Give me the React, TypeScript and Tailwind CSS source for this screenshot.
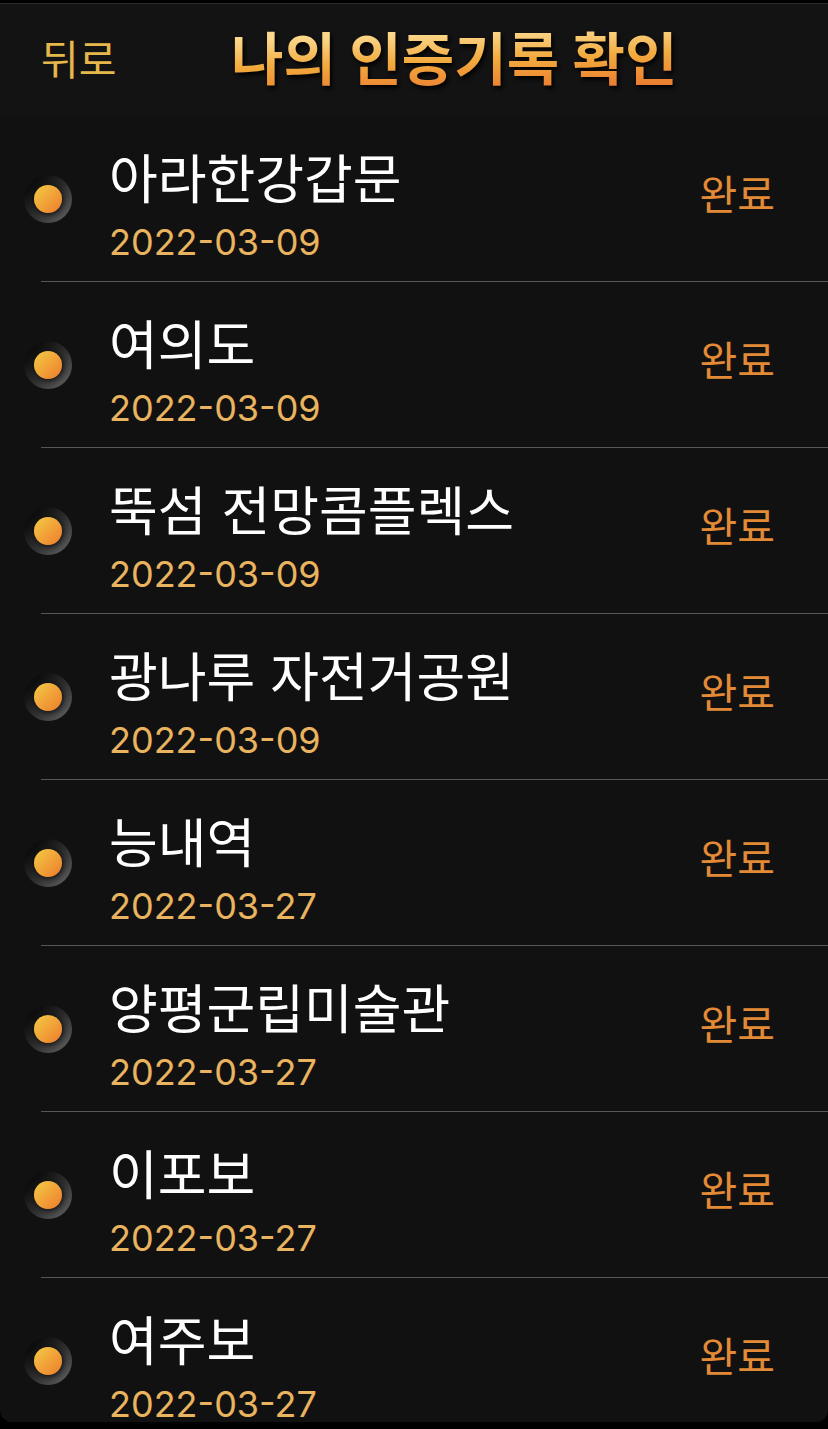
type CertRecord = {
  name: string;
  date: string;
};

const records: CertRecord[] = [
  { name: "아라한강갑문", date: "2022-03-09" },
  { name: "여의도", date: "2022-03-09" },
  { name: "뚝섬 전망콤플렉스", date: "2022-03-09" },
  { name: "광나루 자전거공원", date: "2022-03-09" },
  { name: "능내역", date: "2022-03-27" },
  { name: "양평군립미술관", date: "2022-03-27" },
  { name: "이포보", date: "2022-03-27" },
  { name: "여주보", date: "2022-03-27" },
];

function StatusDot() {
  return (
    <span className="flex size-12 shrink-0 items-center justify-center rounded-full bg-linear-135 from-[#0e0e0e] from-20% via-[#303030] via-55% to-[#6a6a6a]">
      <span className="size-7 rounded-full bg-linear-135 from-[#f2cb45] to-[#ec7a2c] shadow-[1px_1px_6px_rgba(0,0,0,0.9)]" />
    </span>
  );
}

function RecordRow({ record }: { record: CertRecord }) {
  return (
    <li className="pl-6">
      <div className="flex h-[165px] items-center">
        <StatusDot />
        <div className="ml-[37px] min-w-0 flex-1 pt-[6px]">
          <p className="truncate text-[53px] leading-[72px] text-white">{record.name}</p>
          <p className="mt-2 text-[36px] leading-[36px] text-[#e9b35f]">{record.date}</p>
        </div>
        <span className="mr-[53px] pb-2 text-[41px] leading-[48px] text-[#e38a36]">완료</span>
      </div>
      <div className="ml-[17px] h-px bg-[#565656]" />
    </li>
  );
}

export default function App() {
  return (
    <div className="h-screen bg-black pt-[3px] pb-[7px] font-['Inter','Noto_Sans_CJK_KR',sans-serif]">
      <div className="flex h-full flex-col overflow-hidden rounded-b-xl border-t border-[#2a2a2a] bg-[#111111]">
        <header className="flex h-[112px] shrink-0 items-center bg-[#131313] pr-9 pl-[41px]">
          <button type="button" className="shrink-0 text-[41px] leading-[56px] text-[#e6b84c]">
            뒤로
          </button>
          <div className="flex flex-1 justify-center">
            <h1 className="bg-linear-178 from-[#fbd98c] from-20% via-[#f2ab3d] via-50% to-[#ea7a30] to-85% bg-clip-text text-[57px] leading-[80px] font-bold whitespace-nowrap text-transparent drop-shadow-[2px_3px_2px_rgba(0,0,0,0.9)]">
              나의 인증기록 확인
            </h1>
          </div>
        </header>

        <ul className="min-h-0 flex-1 overflow-y-auto [scrollbar-width:none]">
          {records.map((record) => (
            <RecordRow key={record.name} record={record} />
          ))}
        </ul>
      </div>
    </div>
  );
}
